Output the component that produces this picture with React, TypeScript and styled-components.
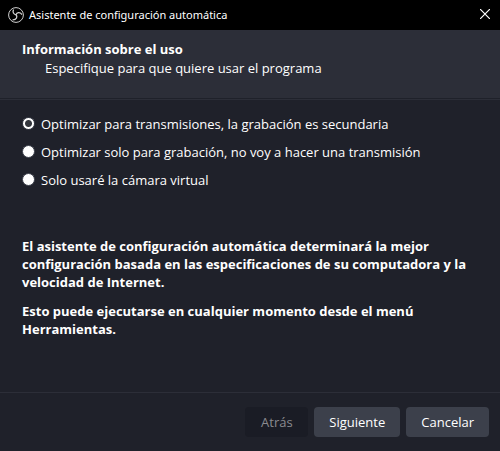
import React, { useState } from "react";
import styled, { createGlobalStyle } from "styled-components";

const GlobalStyle = createGlobalStyle`
  * { box-sizing: border-box; }
  body { margin: 0; background: #1f212a; }
`;

const Dialog = styled.div`
  display: flex;
  flex-direction: column;
  min-height: 100vh;
  background: #1f212a;
  color: #ffffff;
  font: 13px/18px "Open Sans", sans-serif;
`;

const TitleBar = styled.header`
  display: flex;
  align-items: center;
  gap: 5px;
  height: 30px;
  padding: 0 8px;
  background: #000000;
  font: 11px/16px "Noto Sans", sans-serif;
`;

const Title = styled.span`
  flex: 1;
`;

const CloseButton = styled.button`
  display: flex;
  padding: 0 2px 2px;
  border: 0;
  background: none;
  color: #ffffff;
`;

const Heading = styled.section`
  min-height: 70px;
  padding: 9px 22px;
  background: #2c2e38;
  border-bottom: 1px solid #2c2e38;
  box-shadow: inset 0 -1px #1f212a;
`;

const HeadingTitle = styled.h1`
  margin: 0;
  font: bold 13px/20px "Open Sans", sans-serif;
`;

const HeadingText = styled.p`
  margin: 0;
  padding-left: 23px;
`;

const Content = styled.main`
  flex: 1;
  padding: 14px 22px;
`;

const Options = styled.fieldset`
  display: flex;
  flex-direction: column;
  gap: 8px;
  margin: 0;
  padding: 0;
  border: 0;
`;

const Option = styled.label`
  display: flex;
  align-items: center;
  gap: 6px;
  min-height: 20px;
`;

const Radio = styled.input`
  appearance: none;
  width: 13px;
  height: 13px;
  margin: 0 0 2px;
  border: 1px solid #3c404b;
  border-radius: 50%;
  background: #ffffff;

  &:checked {
    background: radial-gradient(circle, #33363d 3px, #ffffff 4px);
  }
`;

const Notes = styled.div`
  display: flex;
  flex-direction: column;
  gap: 11px;
  margin-top: 47px;
  font-weight: bold;
`;

const Note = styled.p`
  margin: 0;
`;

const Footer = styled.footer`
  display: flex;
  justify-content: flex-end;
  gap: 6px;
  padding: 14px 11px;
  border-top: 1px solid #2c2e38;
`;

const Button = styled.button`
  min-width: 63px;
  height: 30px;
  padding: 0 15px;
  border: 0;
  border-radius: 4px;
  background: #3c404b;
  color: #ffffff;
  font: inherit;

  &:disabled {
    background: #1a1c25;
    color: #8a8b90;
  }
`;

const choices = [
  "Optimizar para transmisiones, la grabación es secundaria",
  "Optimizar solo para grabación, no voy a hacer una transmisión",
  "Solo usaré la cámara virtual",
];

function ObsLogo() {
  return (
    <svg width="16" height="16" viewBox="0 0 16 16" fill="none" stroke="#d0d0d0" aria-hidden="true">
      <circle cx="8" cy="8" r="7.4" />
      <path
        d="M5.4 3C4.4 5.2 5.6 7.3 8 7.8M8 7.8C8.8 5.4 11.8 4.8 13.6 7.2M8 7.8C9.8 9.6 8.6 12.8 5 12.8"
        strokeWidth="1.3"
        strokeLinecap="round"
      />
    </svg>
  );
}

export default function App() {
  const [selected, setSelected] = useState(0);
  return (
    <Dialog>
      <GlobalStyle />
      <TitleBar>
        <ObsLogo />
        <Title>Asistente de configuración automática</Title>
        <CloseButton aria-label="Cerrar">
          <svg width="10" height="10" viewBox="0 0 10 10" stroke="currentColor" strokeWidth="1.2">
            <path d="M0 0L10 10M10 0L0 10" />
          </svg>
        </CloseButton>
      </TitleBar>
      <Heading>
        <HeadingTitle>Información sobre el uso</HeadingTitle>
        <HeadingText>Especifique para que quiere usar el programa</HeadingText>
      </Heading>
      <Content>
        <Options aria-label="Información sobre el uso">
          {choices.map((choice, index) => (
            <Option key={choice}>
              <Radio type="radio" name="usage" checked={selected === index} onChange={() => setSelected(index)} />
              {choice}
            </Option>
          ))}
        </Options>
        <Notes>
          <Note>
            El asistente de configuración automática determinará la mejor configuración basada en las
            especificaciones de su computadora y la velocidad de Internet.
          </Note>
          <Note>Esto puede ejecutarse en cualquier momento desde el menú Herramientas.</Note>
        </Notes>
      </Content>
      <Footer>
        <Button disabled>Atrás</Button>
        <Button>Siguiente</Button>
        <Button>Cancelar</Button>
      </Footer>
    </Dialog>
  );
}
